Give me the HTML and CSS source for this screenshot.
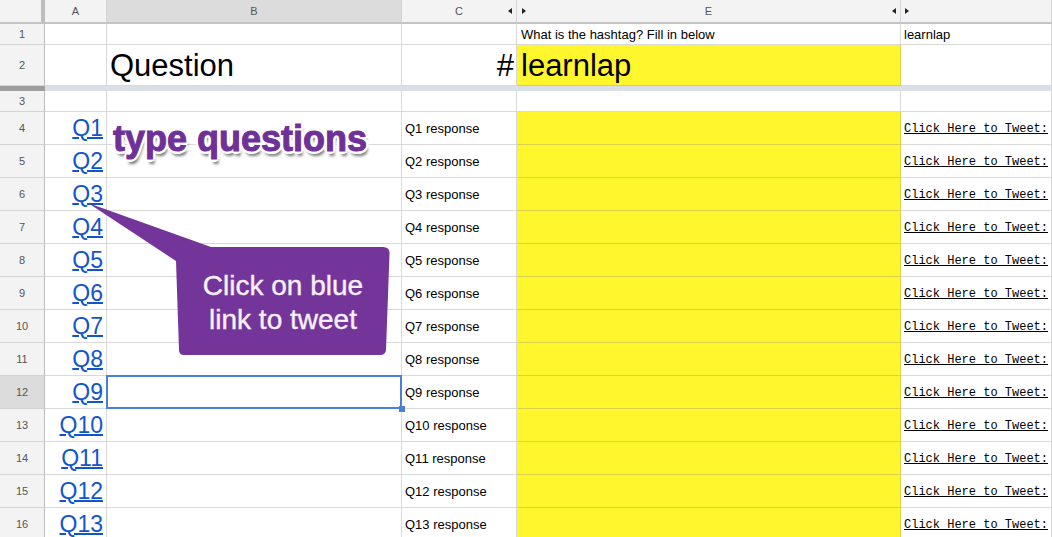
FILE: index.html
```html
<!DOCTYPE html>
<html lang="en">
<head>
<meta charset="utf-8">
<title>Hashtag sheet</title>
<link rel="stylesheet" href="styles.css">
</head>
<body>
<main class="sheet">
  <div class="hd corner"></div>
  <div class="hd col sel">A</div>
  <div class="hd col active">B</div>
  <div class="hd col sel"><span class="hd-label">C</span><i class="tri left at-end"></i></div>
  <div class="hd col sel"><i class="tri right at-start"></i><span class="hd-label">E</span><i class="tri left at-end"></i></div>
  <div class="hd col sel start"><i class="tri right"></i></div>

  <div class="rh">1</div><div class="c"></div><div class="c"></div><div class="c"></div><div class="c txt inset">What is the hashtag? Fill in below</div><div class="c txt">learnlap</div>

  <div class="rh">2</div><div class="c"></div><div class="c big">Question</div><div class="c big end">#</div><div class="c big yellow inset">learnlap</div><div class="c"></div>

  <div class="freeze-head"></div><div class="freeze"></div>

  <div class="rh">3</div><div class="c"></div><div class="c"></div><div class="c"></div><div class="c"></div><div class="c"></div>

  <div class="rh">4</div><a class="c q" href="#">Q1</a><div class="c"></div><div class="c txt">Q1 response</div><div class="c yellow"></div><div class="c mono"><u>Click Here to Tweet:</u></div>
  <div class="rh">5</div><a class="c q" href="#">Q2</a><div class="c"></div><div class="c txt">Q2 response</div><div class="c yellow"></div><div class="c mono"><u>Click Here to Tweet:</u></div>
  <div class="rh">6</div><a class="c q" href="#">Q3</a><div class="c"></div><div class="c txt">Q3 response</div><div class="c yellow"></div><div class="c mono"><u>Click Here to Tweet:</u></div>
  <div class="rh">7</div><a class="c q" href="#">Q4</a><div class="c"></div><div class="c txt">Q4 response</div><div class="c yellow"></div><div class="c mono"><u>Click Here to Tweet:</u></div>
  <div class="rh">8</div><a class="c q" href="#">Q5</a><div class="c"></div><div class="c txt">Q5 response</div><div class="c yellow"></div><div class="c mono"><u>Click Here to Tweet:</u></div>
  <div class="rh">9</div><a class="c q" href="#">Q6</a><div class="c"></div><div class="c txt">Q6 response</div><div class="c yellow"></div><div class="c mono"><u>Click Here to Tweet:</u></div>
  <div class="rh">10</div><a class="c q" href="#">Q7</a><div class="c"></div><div class="c txt">Q7 response</div><div class="c yellow"></div><div class="c mono"><u>Click Here to Tweet:</u></div>
  <div class="rh">11</div><a class="c q" href="#">Q8</a><div class="c"></div><div class="c txt">Q8 response</div><div class="c yellow"></div><div class="c mono"><u>Click Here to Tweet:</u></div>
  <div class="rh active">12</div><a class="c q" href="#">Q9</a><div class="c selected"><span class="handle"></span></div><div class="c txt">Q9 response</div><div class="c yellow"></div><div class="c mono"><u>Click Here to Tweet:</u></div>
  <div class="rh">13</div><a class="c q" href="#">Q10</a><div class="c"></div><div class="c txt">Q10 response</div><div class="c yellow"></div><div class="c mono"><u>Click Here to Tweet:</u></div>
  <div class="rh">14</div><a class="c q" href="#">Q11</a><div class="c"></div><div class="c txt">Q11 response</div><div class="c yellow"></div><div class="c mono"><u>Click Here to Tweet:</u></div>
  <div class="rh">15</div><a class="c q" href="#">Q12</a><div class="c"></div><div class="c txt">Q12 response</div><div class="c yellow"></div><div class="c mono"><u>Click Here to Tweet:</u></div>
  <div class="rh">16</div><a class="c q" href="#">Q13</a><div class="c"></div><div class="c txt">Q13 response</div><div class="c yellow"></div><div class="c mono"><u>Click Here to Tweet:</u></div>
</main>

<p class="note">type questions</p>

<aside class="callout">
  <svg class="callout-shape" width="320" height="170" viewBox="0 0 320 170" aria-hidden="true">
    <path d="M8 8 L131 52 L303 52 Q310 52 309.500 59 L306 155 Q305.500 160 300 160 L104 160 Q99 160 99 155 L96 66 Z" fill="#74359b"/>
  </svg>
  <div class="callout-text">Click on blue<br>link to tweet</div>
</aside>
</body>
</html>
```

FILE: styles.css
```css
* { box-sizing: border-box; }
html, body { margin: 0; height: 100%; overflow: hidden; background: #fff; }
body { position: relative; width: 1052px; height: 537px; font-family: "Liberation Sans", Arial, sans-serif; color: #000; }

.sheet {
  display: grid;
  grid-template-columns: 45px 62px 295px 115px 384px 151px;
  grid-template-rows: 24px 21px 41px 5px 21px repeat(13, 33px);
}

.hd {
  background: #f3f3f3;
  border-right: 1px solid #d4d4d4;
  border-bottom: 2px solid #c4c4c4;
  font-size: 11px;
  color: #555;
  position: relative;
}
.col { display: flex; align-items: center; justify-content: center; padding-bottom: 1px; }
.col.start { justify-content: flex-start; padding-left: 4px; }
.hd.active { background: #dcdcdc; }
.corner { border-right: 4px solid #bdbdbd; border-bottom: 2px solid #c4c4c4; }
.hd-label { flex: 0 0 auto; }

.tri { display: block; width: 0; height: 0; border-style: solid; border-color: transparent; }
.tri.left { border-width: 3.500px 4px 3.500px 0; border-right-color: #222; }
.tri.right { border-width: 3.500px 0 3.500px 4px; border-left-color: #222; }
.at-end { position: absolute; right: 4px; top: 8px; }
.at-start { position: absolute; left: 5px; top: 8px; }

.rh {
  background: #f3f3f3;
  border-right: 1px solid #bdbdbd;
  border-bottom: 1px solid #d4d4d4;
  display: flex;
  align-items: center;
  justify-content: center;
  font-size: 11px;
  color: #555;
}
.rh.active { background: #dcdcdc; }

.c {
  border-right: 1px solid #d9d9d9;
  border-bottom: 1px solid #d9d9d9;
  display: flex;
  align-items: center;
  padding: 0 3px;
  white-space: nowrap;
  overflow: hidden;
  position: relative;
}
.txt { font-size: 13px; }
.inset { padding-left: 4px; }
.big { font-size: 31px; padding-top: 1px; }
.end { justify-content: flex-end; padding-right: 2px; }
.yellow { background: #fff62e; border-color: #d9d24a; }
.q {
  font-size: 23px;
  color: #1155cc;
  text-decoration: underline;
  text-decoration-thickness: 2px;
  justify-content: flex-end;
  align-items: flex-start;
  padding-top: 3px;
}
.mono { font-family: "Liberation Mono", monospace; font-size: 12px; padding-top: 2px; }

.freeze-head { background: #9e9e9e; }
.freeze { grid-column: 2 / -1; background: #dadfe8; }

.selected { border: 2px solid #4a80d8; overflow: visible; margin: -1px 0 0 -1px; z-index: 1; }
.handle {
  position: absolute;
  right: -5px;
  bottom: -5px;
  width: 6px;
  height: 6px;
  background: #4a80d8;
}

.note {
  position: absolute;
  left: 113px;
  top: 118px;
  margin: 0;
  font-size: 36px;
  line-height: 42px;
  font-weight: 700;
  color: #6f3198;
  -webkit-text-stroke: 1px #6f3198;
  white-space: nowrap;
  text-shadow: -3px 0 0 #fff, 3px 0 0 #fff, 0 -3px 0 #fff, 0 3px 0 #fff, -2px -2px 0 #fff, 2px -2px 0 #fff, -2px 2px 0 #fff, 2px 2px 0 #fff, 2px 5px 3px #777;
}

.callout { position: absolute; left: 80px; top: 195px; width: 320px; height: 170px; }
.callout-shape { display: block; }
.callout-text {
  position: absolute;
  left: 101px;
  top: 74px;
  width: 204px;
  text-align: center;
  color: #f6f0f8;
  font-size: 28px;
  line-height: 34px;
  -webkit-text-stroke: 0.4px #f6f0f8;
}
```
